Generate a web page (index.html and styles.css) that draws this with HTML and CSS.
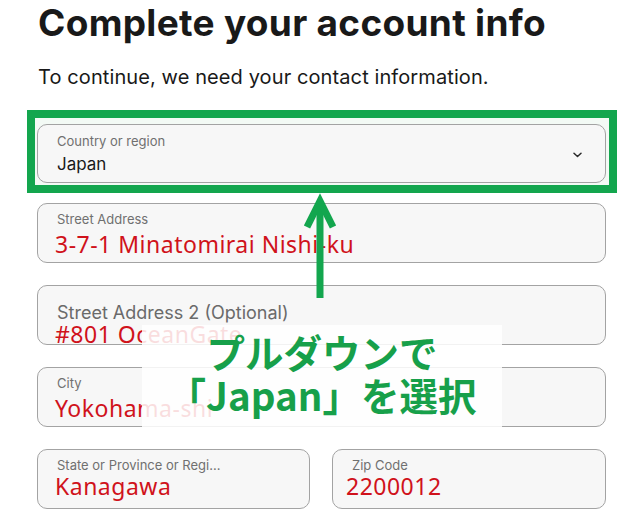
FILE: index.html
```html
<!DOCTYPE html>
<html lang="ja">
<head>
<meta charset="utf-8">
<title>Complete your account info</title>
<link rel="stylesheet" href="styles.css">
</head>
<body>
<main class="page">
  <h1 class="title">Complete your account info</h1>
  <p class="subtitle">To continue, we need your contact information.</p>

  <div class="highlight">
    <div class="field field-select">
      <div class="field-text">
        <span class="label">Country or region</span>
        <span class="value">Japan</span>
      </div>
      <svg class="chevron" width="9" height="6" viewBox="0 0 9 6" aria-hidden="true">
        <path d="M1 1.2 L4.5 4.5 L8 1.2" fill="none" stroke="#2b2b2b" stroke-width="1.5" stroke-linecap="round" stroke-linejoin="round"/>
      </svg>
    </div>
  </div>

  <div class="field">
    <span class="label">Street Address</span>
    <span class="entry entry-low">3-7-1 Minatomirai Nishi-ku</span>
  </div>

  <div class="field field-empty">
    <span class="placeholder">Street Address 2 (Optional)</span>
    <span class="entry entry-tight">#801 OceanGate</span>
  </div>

  <div class="field">
    <span class="label">City</span>
    <span class="entry entry-low">Yokohama-shi</span>
  </div>

  <div class="row">
    <div class="field">
      <span class="label">State or Province or Regi...</span>
      <span class="entry">Kanagawa</span>
    </div>
    <div class="field">
      <span class="label">Zip Code</span>
      <span class="entry entry-shift">2200012</span>
    </div>
  </div>

  <svg class="arrow" width="40" height="110" viewBox="0 0 40 110" aria-hidden="true">
    <line x1="20" y1="10" x2="20" y2="105" stroke="#13a64e" stroke-width="7"/>
    <polyline points="7,34 20,8 33,34" fill="none" stroke="#13a64e" stroke-width="7" stroke-linejoin="miter" stroke-miterlimit="10"/>
  </svg>

  <div class="callout">
    <span class="callout-line">プルダウンで</span>
    <span class="callout-line">「Japan」を選択</span>
  </div>
</main>
</body>
</html>
```

FILE: styles.css
```css
html, body {
  margin: 0;
  padding: 0;
  background: #ffffff;
}

body {
  font-family: Inter, "Liberation Sans", Arial, sans-serif;
  color: #191919;
}

.page {
  position: relative;
  width: 569px;
  padding: 3px 34px 0 37px;
}

.title {
  margin: 0 0 0 1px;
  font-size: 37px;
  line-height: 40px;
  font-weight: 700;
  letter-spacing: 0.3px;
  color: #191919;
  white-space: nowrap;
}

.subtitle {
  margin: 22px 0 0 1px;
  font-size: 20px;
  line-height: 24px;
  letter-spacing: 0.1px;
  color: #191919;
}

.highlight {
  margin: 21px -11px 10px -10px;
  border: 8px solid #13a64e;
  padding: 6px 3px 2px 2px;
  background: #f3faf5;
}

.field {
  box-sizing: border-box;
  height: 60px;
  margin-bottom: 22px;
  padding: 7px 12px 0 19px;
  border: 1px solid #a3a3a3;
  border-radius: 10px;
  background: #f7f7f7;
  display: flex;
  flex-direction: column;
}

.highlight .field {
  height: 59px;
  margin-bottom: 0;
  flex-direction: row;
  align-items: center;
  padding-top: 0;
  padding-right: 23px;
}

.field-text {
  display: flex;
  flex-direction: column;
  flex: 1;
  padding-top: 1px;
}

.label {
  font-size: 13px;
  line-height: 16px;
  color: #707070;
  white-space: nowrap;
}

.value {
  margin-top: 4px;
  font-size: 17px;
  line-height: 22px;
  color: #191919;
}

.chevron {
  display: block;
  margin-top: 2px;
}

.placeholder {
  margin-top: 10px;
  font-size: 18px;
  line-height: 20px;
  color: #6a6a6a;
  white-space: nowrap;
}

.entry {
  margin-left: -2px;
  font-family: "Noto Sans", "Liberation Sans", sans-serif;
  font-size: 23px;
  line-height: 26px;
  letter-spacing: 0.5px;
  color: #d0121b;
  white-space: nowrap;
}

.entry-low {
  margin-top: 4px;
}

.entry-tight {
  margin-top: -2px;
}

.entry-shift {
  margin-left: -6px;
}

.row {
  display: grid;
  grid-template-columns: 273px 274px;
  gap: 22px;
}

.row .field {
  margin-bottom: 0;
}

.arrow {
  position: absolute;
  left: 300px;
  top: 193px;
}

.callout {
  position: absolute;
  left: 142px;
  top: 325px;
  width: 360px;
  height: 103px;
  box-sizing: border-box;
  padding-top: 5px;
  background: rgba(255, 255, 255, 0.86);
  display: flex;
  flex-direction: column;
  align-items: center;
}

.callout-line {
  font-family: "Noto Sans CJK JP", "Noto Sans", sans-serif;
  font-weight: 700;
  font-size: 38.5px;
  line-height: 43px;
  color: #17a04a;
  white-space: nowrap;
}
```
